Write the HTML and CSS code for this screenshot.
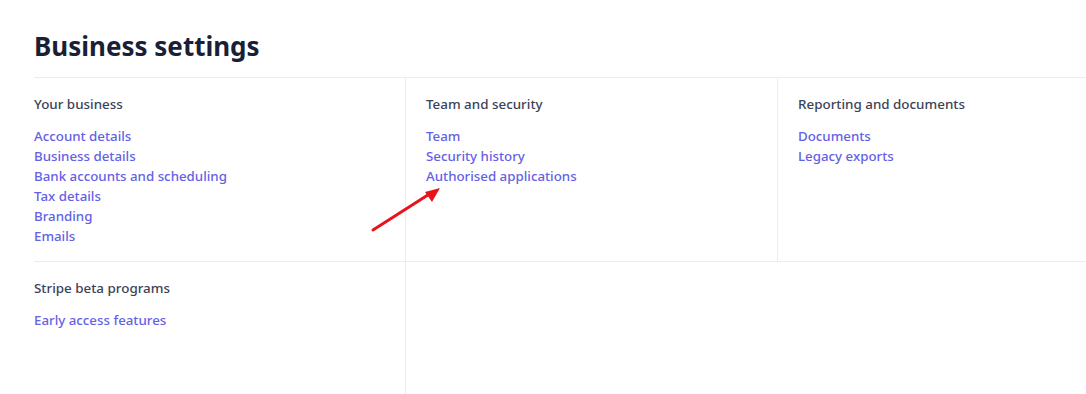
FILE: index.html
```html
<!DOCTYPE html>
<html lang="en">
<head>
     <meta charset="UTF-8">
     <meta name="viewport" content="width=device-width, initial-scale=1.0">
     <title>Business settings</title>
     <link rel="stylesheet" href="styles.css">
</head>
<body>
     <div class="page">
          <h1 class="title">Business settings</h1>
          <div class="grid">
               <div class="cell">
                    <h2>Your business</h2>
                    <ul>
                         <li><a href="#">Account details</a></li>
                         <li><a href="#">Business details</a></li>
                         <li><a href="#">Bank accounts and scheduling</a></li>
                         <li><a href="#">Tax details</a></li>
                         <li><a href="#">Branding</a></li>
                         <li><a href="#">Emails</a></li>
                    </ul>
               </div>
               <div class="cell">
                    <h2>Team and security</h2>
                    <ul>
                         <li><a href="#">Team</a></li>
                         <li><a href="#">Security history</a></li>
                         <li><a href="#">Authorised applications</a></li>
                    </ul>
               </div>
               <div class="cell">
                    <h2>Reporting and documents</h2>
                    <ul>
                         <li><a href="#">Documents</a></li>
                         <li><a href="#">Legacy exports</a></li>
                    </ul>
               </div>
               <div class="cell row2">
                    <h2>Stripe beta programs</h2>
                    <ul>
                         <li><a href="#">Early access features</a></li>
                    </ul>
               </div>
               <div class="cell row2"></div>
               <div class="cell row2 empty"></div>
          </div>
     </div>
     <!-- annotation arrow -->
     <svg class="arrow" width="80" height="56" viewBox="0 0 80 56">
          <line x1="8" y1="50" x2="66" y2="13" stroke="#e8141b" stroke-width="3" stroke-linecap="round"/>
          <polygon points="75,8 60,12 67,22" fill="#e8141b"/>
     </svg>
</body>
</html>
```

FILE: styles.css
```css
body{
     margin: 0;
     font-family: "Noto Sans", "Open Sans", sans-serif;
     color: #3c4257;
     background: #ffffff;
     overflow: hidden;
}
.page{
     height: 394px;
     box-sizing: border-box;
     padding: 28px 0 0 34px;
     display: flex;
     flex-direction: column;
}
.title{
     margin: 0;
     font-size: 26px;
     line-height: 36px;
     font-weight: 700;
     color: #1a1f36;
     padding-bottom: 13px;
     border-bottom: 1px solid #ebeef1;
}
.grid{
     flex: 1;
     display: grid;
     grid-template-columns: 371px 372px 1fr;
     grid-template-rows: auto 1fr;
}
.cell{
     padding: 16px 20px 15px 20px;
     border-left: 1px solid #ebeef1;
}
.cell:nth-child(1), .cell:nth-child(4), .cell.empty{
     padding-left: 0;
     border-left: none;
}
.row2{
     border-top: 1px solid #ebeef1;
}
.cell h2{
     margin: 0 0 12px 0;
     font-size: 13.4px;
     line-height: 20px;
     font-weight: 500;
     color: #3c4257;
}
.cell ul{
     list-style: none;
     margin: 0;
     padding: 0;
}
.cell li{
     font-size: 13.3px;
     line-height: 20px;
}
.cell a{
     color: #6461e6;
     text-decoration: none;
     font-weight: 500;
}
.arrow{
     position: absolute;
     left: 365px;
     top: 180px;
}
```
